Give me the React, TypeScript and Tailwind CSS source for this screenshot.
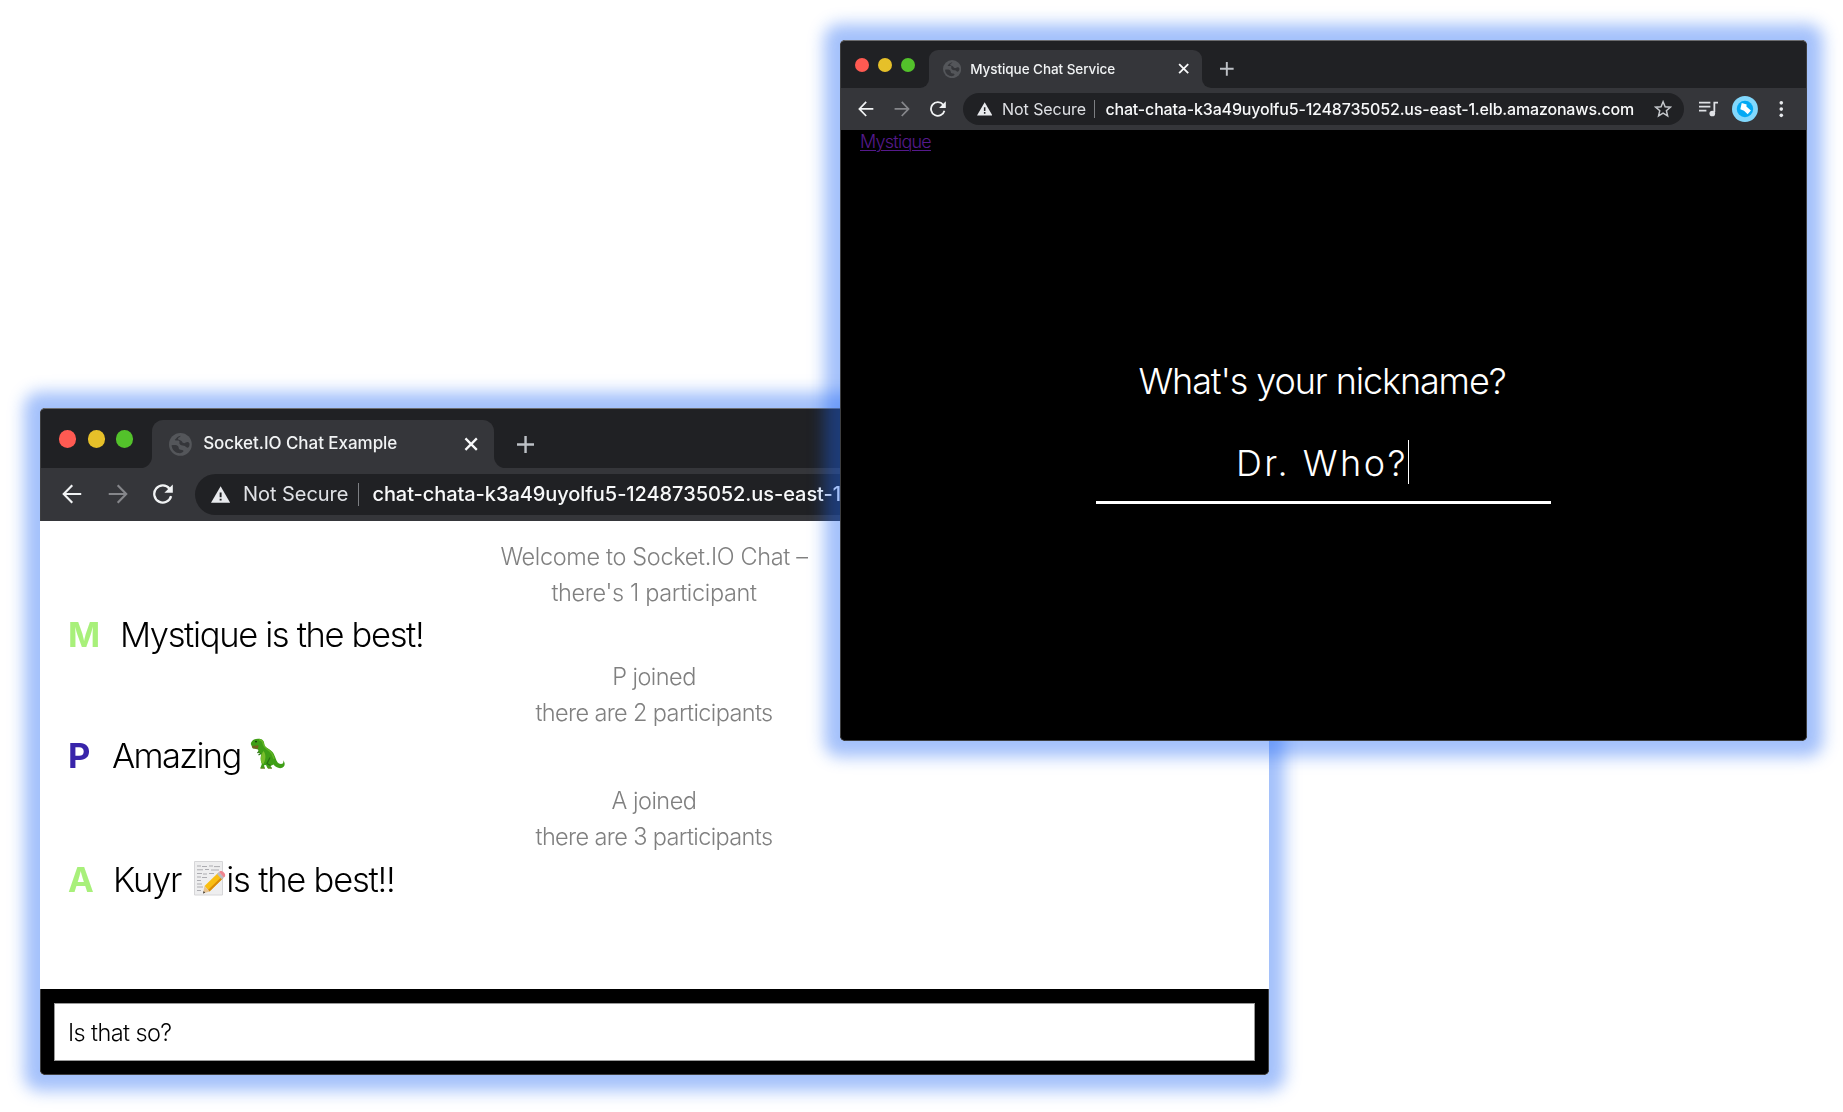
import React from "react";

const SANS = "font-['Inter','Liberation_Sans',sans-serif]";

function Globe() {
  return (
    <svg viewBox="0 0 16 16" className="size-[calc(16*var(--u))]">
      <circle cx="8" cy="8" r="8" fill="#54565a" />
      <path d="M1.8 8.6C3.5 8.2 5.6 8.2 6.4 9.3c.7 1 .1 1.9 1.2 2.300.9.3 2.300.2 2.600 1.100-.4 1-1.500 1.500-2.500 1.500C4.600 14.200 2.100 12 1.800 8.600zM8.300 1.900c-.3 1-1.800 1-2 2-.1.900 1 1 1.900 1.300 1 .3 1 1.600 2.100 1.900 1.100.2 1.600-.9 2.700-.8.6 0 1.100.5 1.400 1 .2 1.500-.5 3-1.500 3-1 0-1.300-1.200-2.400-1.300-1.200-.1-2.500-.3-3.100-1.400-.5-1 .5-1.300-.3-2-.8-.6-2 .1-3.100-.6C5 3.500 6.300 2.200 8.300 1.900z" fill="#35363a" />
    </svg>
  );
}

function Arrow({ flip, color }: { flip?: boolean; color: string }) {
  return (
    <svg viewBox="0 0 14 14" fill="none" stroke={color} strokeWidth="1.5" className={"size-[calc(14*var(--u))] " + (flip ? "-scale-x-100" : "")}>
      <path d="M13.500 7H1.400M7.200.8 1.200 7l6 6.200" />
    </svg>
  );
}

function Reload() {
  return (
    <svg viewBox="0 0 14 14" fill="none" className="size-[calc(14*var(--u))]">
      <path d="M12.700 8.500A6 6 0 1 1 11.600 3.300" stroke="#f1f3f4" strokeWidth="1.600" />
      <path d="M13.900.3v5.900H8z" fill="#f1f3f4" />
    </svg>
  );
}

function Tools() {
  return (
    <div className="flex flex-1 items-center pl-[calc(13.600*var(--u))]">
      <svg viewBox="0 0 17 14" fill="none" stroke="#dfe1e5" strokeWidth="1.600" className="h-[calc(14*var(--u))] w-[calc(17*var(--u))] shrink-0">
        <path d="M0 1.500h10M0 5h10M0 8.500h6.500M16.800 1.500h-3.300v8.500" />
        <circle cx="11.700" cy="11" r="2.500" fill="#dfe1e5" stroke="none" />
      </svg>
      <svg viewBox="0 0 24 24" className="ml-[calc(12*var(--u))] size-[calc(22.800*var(--u))] shrink-0">
        <circle cx="12" cy="12" r="12" fill="#81d8fd" />
        <circle cx="12" cy="12" r="7.600" fill="#03a9f4" />
        <path d="m9 6.500 4.600 1.300-.3 2 4.200 3.700-3 3.500-3.400-3.300-3.400-1.500z" fill="#fff" />
      </svg>
      <svg viewBox="0 0 4 16" fill="#e8eaed" className="ml-[calc(18.600*var(--u))] h-[calc(16*var(--u))] w-[calc(4*var(--u))] shrink-0">
        <circle cx="2" cy="2.500" r="1.600" /><circle cx="2" cy="8" r="1.600" /><circle cx="2" cy="13.500" r="1.600" />
      </svg>
    </div>
  );
}

type BrowserProps = { frame: string; title: string; titleClass: string; secureClass: string; urlClass: string; children: React.ReactNode };

function Browser({ frame, title, titleClass, secureClass, urlClass, children }: BrowserProps) {
  return (
    <section className={"absolute shadow-[0_0_16px_16px_rgba(28,100,245,0.4)] " + frame}>
      <div className="relative flex h-full w-full flex-col overflow-hidden rounded-[inherit]">
        <div className="flex h-[calc(42.300*var(--u))] shrink-0 bg-[#202124]">
          <div className="flex w-[calc(78.500*var(--u))] items-center gap-[calc(7.800*var(--u))] pl-[calc(13.400*var(--u))] pt-[calc(1.400*var(--u))]">
            <i className="size-[calc(12.200*var(--u))] rounded-full bg-[#ff5a52]" />
            <i className="size-[calc(12.200*var(--u))] rounded-full bg-[#e6c029]" />
            <i className="size-[calc(12.200*var(--u))] rounded-full bg-[#53c22b]" />
          </div>
          <div className="mt-[calc(8.500*var(--u))] -ml-[calc(8*var(--u))] flex">
            <div className="flex w-[calc(8*var(--u))] items-end bg-[#35363a]">
              <div className="h-full w-full rounded-br-[calc(8*var(--u))] bg-[#202124]" />
            </div>
            <div className="flex w-[calc(240.300*var(--u))] items-center bg-[#202124]">
              <div className="flex h-full w-full items-center rounded-t-[calc(8*var(--u))] bg-[#35363a] pl-[calc(12*var(--u))] pr-[calc(11.200*var(--u))]">
                <Globe />
                <span className={"ml-[calc(8*var(--u))] flex-1 whitespace-nowrap font-medium text-[#f1f3f4] " + titleClass}>{title}</span>
                <svg viewBox="0 0 10 10" stroke="#f8f9fa" strokeWidth="1.600" className="size-[calc(10*var(--u))]"><path d="m1 1 8 8M9 1 1 9" /></svg>
              </div>
            </div>
            <div className="flex w-[calc(8*var(--u))] bg-[#35363a]">
              <div className="h-full w-full rounded-bl-[calc(8*var(--u))] bg-[#202124]" />
            </div>
            <svg viewBox="0 0 12 12" stroke="#bdc1c6" strokeWidth="1.700" className="ml-[calc(7.700*var(--u))] size-[calc(12*var(--u))] self-center"><path d="M6 0v12M0 6h12" /></svg>
          </div>
        </div>
        <div className="flex h-[calc(37.200*var(--u))] shrink-0 items-center bg-[#35363a] pb-[calc(0.600*var(--u))]">
          <div className="flex w-[calc(108.500*var(--u))] shrink-0 items-center gap-[calc(18*var(--u))] pl-[calc(15.500*var(--u))]">
            <Arrow color="#f1f3f4" />
            <Arrow flip color="#85868a" />
            <Reload />
          </div>
          <div className="flex h-[calc(28.300*var(--u))] w-[calc(633.500*var(--u))] shrink-0 items-center rounded-full bg-[#202124] pl-[calc(11.600*var(--u))] pr-[calc(10.300*var(--u))]">
            <svg viewBox="0 0 14 12" className="h-[calc(12*var(--u))] w-[calc(13.500*var(--u))]">
              <path d="M7 0 14 12H0z" fill="#e8eaed" />
              <path d="M6.300 4.500h1.400v3.400H6.300zM6.300 9h1.400v1.400H6.300z" fill="#202124" />
            </svg>
            <span className={"ml-[calc(8.900*var(--u))] w-[calc(80.500*var(--u))] whitespace-nowrap text-[#dfe1e5] " + secureClass}>Not Secure</span>
            <i className="h-[calc(16*var(--u))] w-px bg-[#7d7f83]" />
            <span className={"ml-[calc(9.600*var(--u))] flex-1 whitespace-nowrap font-medium text-[#f8f9fa] " + urlClass}>chat-chata-k3a49uyolfu5-1248735052.us-east-1.elb.amazonaws.com</span>
            <svg viewBox="0 0 16 16" fill="none" stroke="#c4c7cb" strokeWidth="1.300" className="size-[calc(16*var(--u))]">
              <path d="m8 1.500 1.800 4.400 4.700.4-3.600 3.100 1.100 4.600L8 11.500 4 14l1.100-4.600L1.500 6.300l4.700-.4z" />
            </svg>
          </div>
          <Tools />
        </div>
        {children}
        <div className="pointer-events-none absolute inset-0 rounded-[inherit] border border-[#3d3e40] border-t-[#6b6c6f] mix-blend-lighten" />
      </div>
    </section>
  );
}

function Dino() {
  return (
    <svg viewBox="0 0 36 32" className="-mt-[4px] h-[32px] w-[36px]">
      <path d="M.8 6C1 2.500 4 .8 8 .7c4-.2 6.300 2 6.300 5.300 0 2.200 1.200 3.200 3.700 4.500 4.500 2.300 6.200 5.500 7.500 9.500 1.200 3.800 2.800 6 5.500 6 2.200 0 3-1.800 2-3.800 2.200 2 2.500 6.300-.8 7.600-3.500 1.200-6.700-.8-8.700-3.300L20.500 28l1.500 2.300h-4.500L16 27l-2 .3.800 3H10.300l1.500-4.300c-1.500-3.500-1.500-6.500-.5-9.500l-2.300-1.500L8 11.500 2.500 10z" fill="#3f9e16" />
      <path d="M13.500 13c3 4 2 8.500 0 13l-2-1c-1-3-.8-6 .2-9z" fill="#77bd2b" />
      <path d="M1.800 8 8.500 7.300l-.6 3.400-5-.3z" fill="#75611f" />
      <path d="M9 1.800c3 0 4 2 4.500 4.500.4 2.500 3 4.500 6 6.500 3 2 3.500 5 4.500 8" fill="none" stroke="#61b524" strokeWidth="1.500" />
      <path d="m20 19.500-3 6 3.500 2M11 15.500l-2.500 1.500M9 13.500l-1.500 1.500" fill="none" stroke="#277010" strokeWidth="1.300" />
      <path d="M15 30.200h-4.500M22 30.200h-4" stroke="#6a7f24" strokeWidth="1" />
      <circle cx="6" cy="3.600" r=".9" fill="#172b08" />
    </svg>
  );
}

function Memo() {
  return (
    <svg viewBox="0 0 32 35" className="-mt-[4px] h-[35px] w-[32px]">
      <path d="M.5.500h28v33.500H.5z" fill="#eeeeef" stroke="#d6d6d8" />
      <path d="M3 5h4m1 .5h5m2-.5h4m1 .6h6M3 8.800h6m2-.3h4m2 .5h8M3 12.500h5m1 .5h4m2-.5h5M3 16h4m1 .5h5M3 19.500h4M3 23h5M3 26h6M3 29.500h4" stroke="#a4a4a9" strokeWidth=".9" fill="none" />
      <path d="m10.500 25 14-13.500 4.800 5.500L15.500 30.500z" fill="#f9be12" />
      <path d="m14 29 14-13.500 1.300 1.500L15.500 30.500z" fill="#d98a08" />
      <path d="m10.500 25 5 5.500L9 32.500z" fill="#e7c491" />
      <path d="m9.700 30 1.400 1.800L9 32.500z" fill="#333" />
      <path d="m23 13 2-1.900 4.800 5.500-2 1.900z" fill="#b9bcc2" />
      <path d="m25 11.100.9-.8c2.500-1.500 6.600 2.800 4.900 5.400l-1 .9z" fill="#f0858f" />
    </svg>
  );
}

function Log({ className, children }: { className: string; children: string }) {
  return <li className={"flex h-[36px] items-center justify-center whitespace-nowrap text-[23.500px] font-light text-[#808080] " + className}><span>{children}</span></li>;
}

export default function App() {
  return (
    <main className={"relative h-[1112px] w-[1843px] overflow-hidden bg-white " + SANS}>
      <Browser
        frame="left-[40px] top-[408px] h-[667px] w-[1229px] rounded-[5px] [--u:1.425px]"
        title="Socket.IO Chat Example"
        titleClass="text-[17px] tracking-[-0.05px]"
        secureClass="text-[20px] tracking-[-0.06px]"
        urlClass="text-[20px] tracking-[-0.06px]"
      >
        <div className="flex min-h-0 flex-1 flex-col bg-white text-black">
          <ul className="flex-1 pl-[28px] pr-[29px] pt-[17px]">
            <Log className="tracking-[-0.35px]">Welcome to Socket.IO Chat –</Log>
            <Log className="tracking-[-0.36px]">there's 1 participant</Log>
            <li className="flex h-[48px] items-center whitespace-nowrap pt-[2px] text-[34.500px] font-light">
              <b className="w-[52px] font-bold tracking-[-1px] text-[#a8f07a]">M</b><span className="tracking-[-1.35px]">Mystique is the best!</span>
            </li>
            <Log className="tracking-[-0.55px]">P joined</Log>
            <Log className="tracking-[-0.63px]">there are 2 participants</Log>
            <li className="flex h-[52px] items-center whitespace-nowrap text-[34.500px] font-light">
              <b className="w-[44px] font-bold text-[#3824aa]">P</b><span className="mr-[9px] tracking-[-1.65px]">Amazing</span><Dino />
            </li>
            <Log className="tracking-[-0.5px]">A joined</Log>
            <Log className="tracking-[-0.63px]">there are 3 participants</Log>
            <li className="flex h-[52px] items-center whitespace-nowrap text-[34.500px] font-light">
              <b className="w-[45px] font-bold text-[#a8f07a]">A</b><span className="mr-[13px] tracking-[-1.2px]">Kuyr</span><Memo /><span className="tracking-[-1.22px]">is the best!!</span>
            </li>
          </ul>
          <div className="h-[86px] shrink-0 bg-black p-[14px]">
            <div className="flex h-[58px] items-center border border-[#999] bg-white pl-[13px] pt-px text-[23.500px] font-light tracking-[-0.6px]"><span>Is that so?</span></div>
          </div>
        </div>
      </Browser>
      <Browser
        frame="left-[840px] top-[40px] h-[701px] w-[967px] rounded-[5px] [--u:1.137px]"
        title="Mystique Chat Service"
        titleClass="text-[13.500px] tracking-[-0.06px]"
        secureClass="text-[16px] tracking-[-0.06px]"
        urlClass="text-[16px] tracking-[-0.17px]"
      >
        <div className="flex min-h-0 flex-1 flex-col bg-black text-white">
          <a className="ml-[20px] mt-px h-[22px] self-start text-[18px] font-light leading-[22px] tracking-[-0.75px] text-[#551a8b] underline decoration-1 underline-offset-2">Mystique</a>
          <div className="mt-[206px] flex flex-col items-center">
            <p className="-ml-[3px] h-[44px] whitespace-nowrap text-[36px] font-light leading-[44px] tracking-[-1.12px]">What's your nickname?</p>
            <div className="mt-[37px] flex h-[64px] w-[455px] justify-center border-b-[3px] border-white pr-[2px]">
              <span className="h-[44px] whitespace-nowrap text-[36px] font-light leading-[46px] tracking-[2.5px]">Dr. Who?</span>
              <i className="h-[44px] w-px bg-white" />
            </div>
          </div>
        </div>
      </Browser>
    </main>
  );
}
